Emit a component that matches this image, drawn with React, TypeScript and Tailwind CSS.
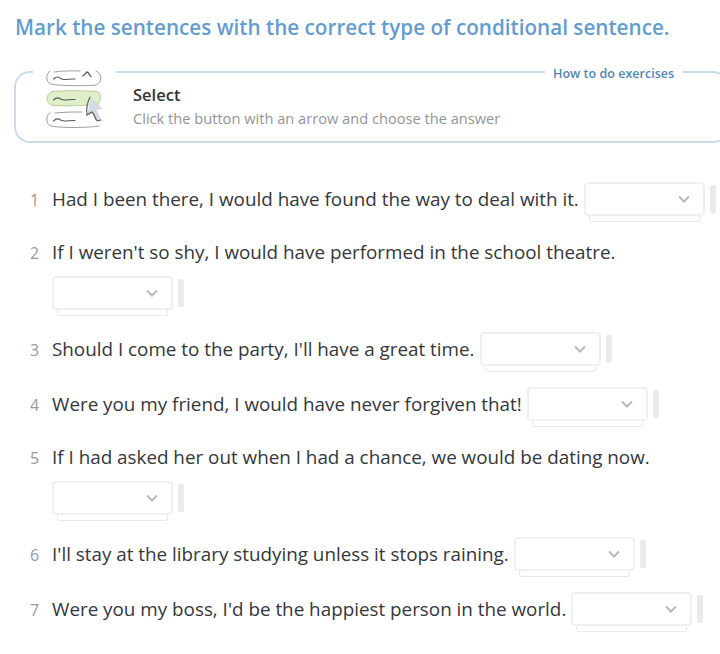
const sentences = [
  { id: 1, text: "Had I been there, I would have found the way to deal with it.", width: "w-[526px]" },
  { id: 2, text: "If I weren't so shy, I would have performed in the school theatre.", width: "w-[563px]", wraps: true },
  { id: 3, text: "Should I come to the party, I'll have a great time.", width: "w-[422px]" },
  { id: 4, text: "Were you my friend, I would have never forgiven that!", width: "w-[469px]" },
  { id: 5, text: "If I had asked her out when I had a chance, we would be dating now.", width: "w-[597px]", wraps: true },
  { id: 6, text: "I'll stay at the library studying unless it stops raining.", width: "w-[456px]" },
  { id: 7, text: "Were you my boss, I'd be the happiest person in the world.", width: "w-[513px]" },
];

function SelectIllustration() {
  return (
    <svg width="60" height="62" viewBox="0 0 60 62" fill="none" strokeLinecap="round" aria-hidden="true">
      <g stroke="#85858a" strokeWidth="0.8">
        <path d="M5 1C1 3 0 12 6 14C14 16 43 16 51 15C58 13 57 3 51 1M9 2C18 1 27 0.5 35 1" />
        <path d="M5 43C1 44 0 54 6 56C14 58 44 58 54 56M10 43C20 42 29 42 37 42" />
      </g>
      <path
        d="M8 21.5C23 20 43 21 51 21.5C57 22 56 30 54 33C50 36 18 36 8 35.5C0 34 0 23 8 21.5Z"
        fill="#e0efc8"
        stroke="#a9c488"
        strokeWidth="0.8"
      />
      <g stroke="#55585c" strokeWidth="1.1">
        <path d="M8.5 9C11 6.5 13.5 6.5 15.5 8.5C19 11 24 8.5 30 9" />
        <path d="M8.5 30C11 27.5 13.5 27.5 15.5 29C20 31.5 24 29 30 29.5" />
        <path d="M8.5 51C11 48.5 13.5 48.5 15.5 50C20 52.5 24 50 30 50.5" />
        <path d="M37.5 6C40 5 41 2 42 2C43.5 2 44 5 46 6.5" strokeWidth="1.3" />
      </g>
      <path d="M46 27L58 39L52 40L56 50L51 51L47 43L42 46Z" fill="#d5dbe2" />
      <path d="M45 27C42 33 41 38 42 45L47 42C50 44 50 50 52.5 51L56 50" stroke="#55585c" strokeWidth="1.1" />
    </svg>
  );
}

function AnswerSelect() {
  return (
    <div className="flex h-10 items-start gap-[5px] pt-[3px]">
      <button
        type="button"
        aria-label="Choose the answer"
        className="relative flex h-[34px] w-[121px] items-center justify-end rounded-[4px] border-2 border-[#f0f0f1] bg-white pr-[10.5px] text-[#b9b9bb]"
      >
        <svg width="18" height="16" viewBox="0 0 18 16" fill="none" stroke="currentColor" strokeWidth="2">
          <path d="M4 5.5L9 10.5L14 5.5" />
        </svg>
        <span className="absolute top-[32px] left-[3px] h-[6px] w-[111px] rounded-b-[3px] border border-t-0 border-[#e9e9eb]" />
      </button>
      <span className="mt-[3px] h-7 w-[6px] rounded-[2px] bg-[#e8eaec]" />
    </div>
  );
}

export default function App() {
  return (
    <main className="h-[654px] w-[720px] overflow-hidden bg-white font-['Open_Sans','Noto_Sans',sans-serif]">
      <h1 className="pt-3 pl-[15px] text-[20.68px] leading-[30px] font-semibold whitespace-nowrap text-[#659ccd]">
        Mark the sentences with the correct type of conditional sentence.
      </h1>

      <section className="relative mt-[29px] ml-[14px] h-[72px] w-[715px] rounded-[16px] border-2 border-[#c9dce7]">
        <div className="absolute -top-[3px] left-[17px] h-[62px] w-[83px] bg-white pl-[12px]">
          <SelectIllustration />
        </div>
        <a className="absolute -top-[8px] left-[529px] w-[138px] bg-white pl-2 text-[12.55px] leading-[18px] font-semibold whitespace-nowrap text-[#5586b1]">
          How to do exercises
        </a>
        <div className="pt-[11px] pl-[117px] whitespace-nowrap">
          <h2 className="text-[16.5px] leading-[22px] font-semibold text-[#333]">Select</h2>
          <p className="text-[14.63px] leading-[25px] text-[#949494]">
            Click the button with an arrow and choose the answer
          </p>
        </div>
      </section>

      <ol className="mt-[36px] flex flex-col gap-[15px] pl-[30px]">
        {sentences.map((item) => (
          <li key={item.id} className={item.wraps ? "flex items-baseline pb-px" : "flex items-baseline"}>
            <span className="w-[22px] shrink-0 text-[16px] leading-[20px] text-[#999]">{item.id}</span>
            <div className="flex flex-1 flex-wrap items-center gap-x-[6px] gap-y-[3px]">
              <span className={`${item.width} text-[18.83px] leading-[36px] whitespace-nowrap text-[#34373b]`}>
                {item.text}
              </span>
              <AnswerSelect />
            </div>
          </li>
        ))}
      </ol>
    </main>
  );
}
